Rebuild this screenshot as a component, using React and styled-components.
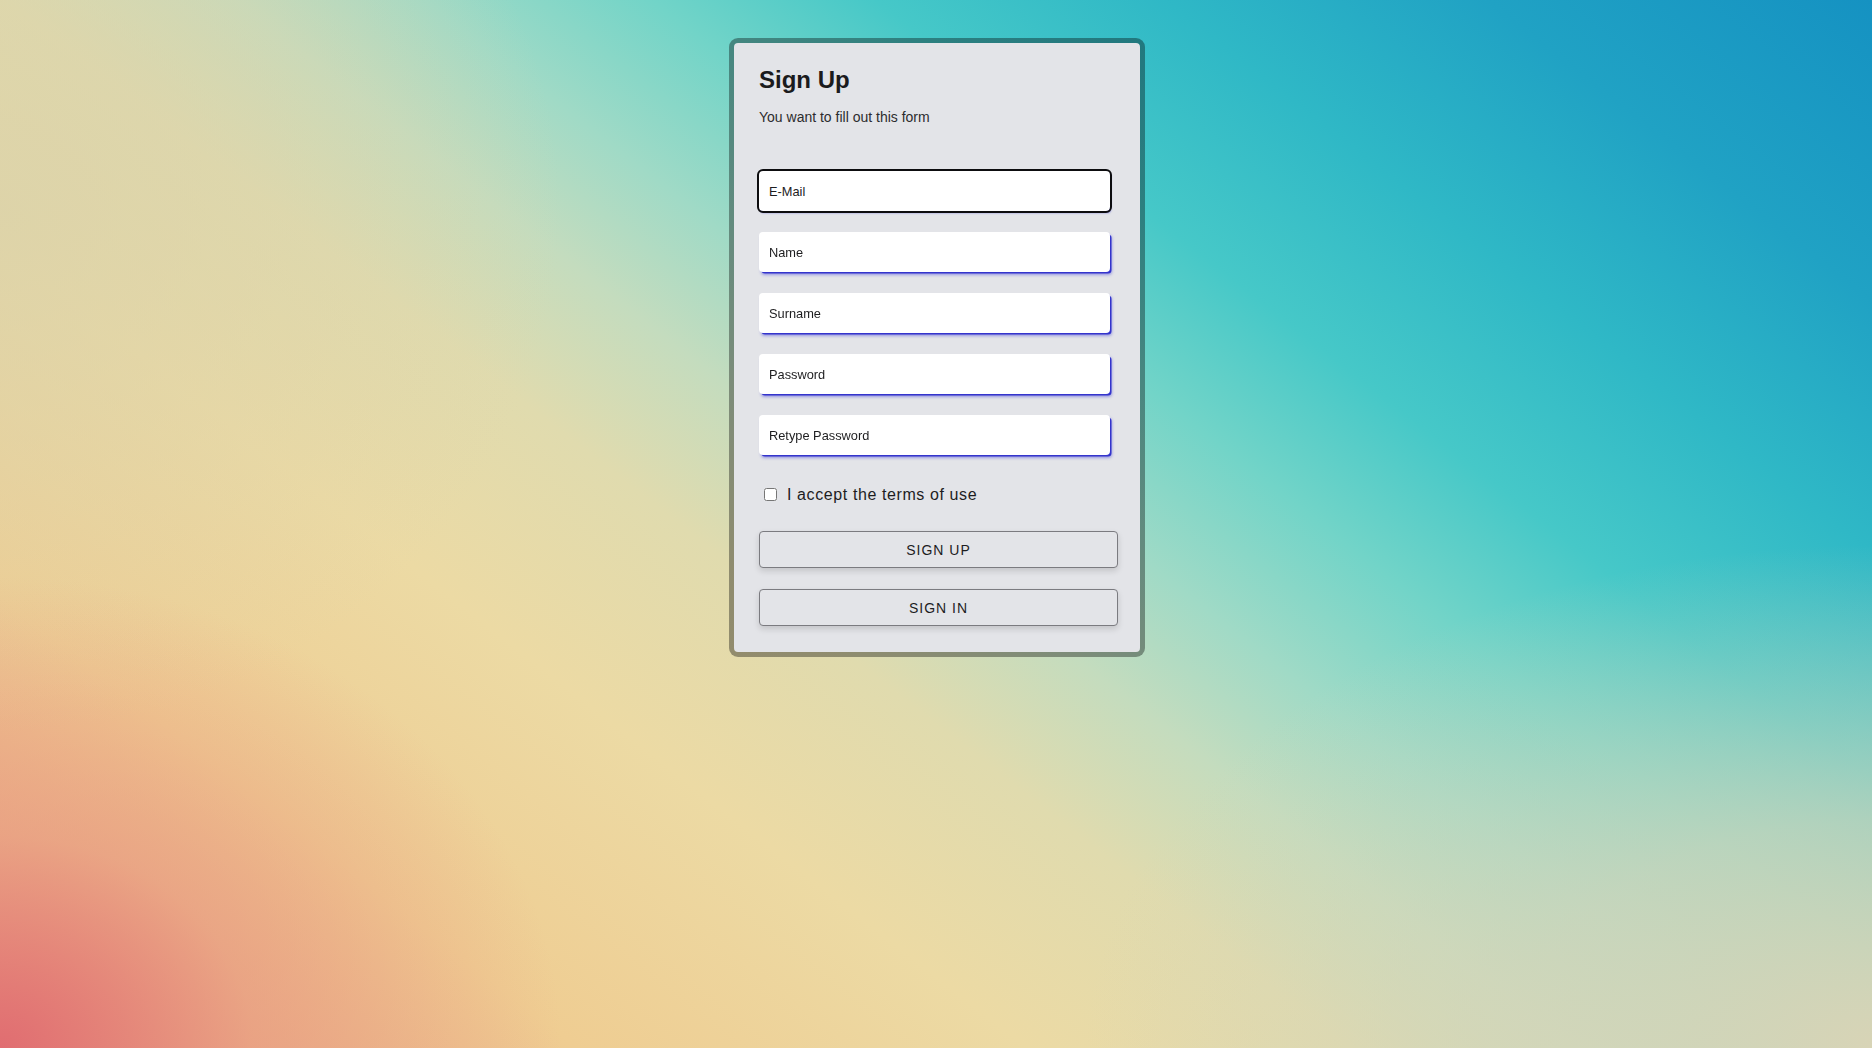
import React from "react";
import styled, { createGlobalStyle } from "styled-components";

const GlobalStyle = createGlobalStyle`
  html, body {
    margin: 0;
    padding: 0;
    height: 100%;
  }
  body {
    font-family: "Liberation Sans", Arial, sans-serif;
  }
  * { box-sizing: border-box; }
`;

const Page = styled.div`
  min-height: 100vh;
  width: 100%;
  display: flex;
  justify-content: center;
  align-items: flex-start;
  padding: 38px 0 0 2px;
  background:
    radial-gradient(ellipse 30% 45% at 0% 100%, rgba(224, 106, 112, 0.95) 0%, rgba(232, 150, 128, 0.6) 45%, rgba(238, 190, 140, 0) 100%),
    radial-gradient(ellipse 42% 48% at 100% 100%, rgba(216, 212, 182, 1) 0%, rgba(214, 212, 184, 0.7) 45%, rgba(210, 212, 186, 0) 100%),
    radial-gradient(ellipse 30% 50% at 0% 20%, rgba(218, 210, 170, 0.8) 0%, rgba(218, 210, 170, 0) 100%),
    linear-gradient(38deg,
      #e9a282 0%,
      #efcd92 18%,
      #ecdaa4 32%,
      #e0dbae 42%,
      #c4dcbe 49%,
      #a0dac6 55%,
      #72d4c8 62%,
      #46c8c8 69%,
      #2fb8c6 78%,
      #20a2c4 88%,
      #1592c2 100%);
`;

const Card = styled.form`
  width: 416px;
  border: 5px solid rgba(0, 0, 0, 0.36);
  border-radius: 9px;
  background: #e3e4e8;
  background-clip: padding-box;
  padding: 23px 22px 26px 25px;
  display: flex;
  flex-direction: column;
`;

const Title = styled.h2`
  margin: 0;
  font-size: 24px;
  line-height: 28px;
  font-weight: 700;
  color: #1b1b1d;
`;

const Subtitle = styled.p`
  margin: 15px 0 0;
  font-size: 14px;
  line-height: 16px;
  color: #2c2c2e;
`;

const Fields = styled.div`
  margin-top: 46px;
  display: flex;
  flex-direction: column;
  gap: 21px;
`;

const Input = styled.input`
  width: 351px;
  height: 40px;
  border: none;
  border-radius: 4px;
  padding: 0 10px;
  background: #ffffff;
  font-family: "Liberation Sans", Arial, sans-serif;
  font-size: 12.8px;
  color: #1d1d1f;
  box-shadow: ${(p) =>
    p.$active
      ? "1px 2px 2px rgba(40, 40, 210, 0.55)"
      : "2px 2px 0 -0.5px #3434cc, 2px 3px 3px rgba(60, 60, 220, 0.45)"};
  outline: ${(p) => (p.$active ? "2px solid #0d0d0f" : "none")};
  outline-offset: 0;

  &::placeholder {
    color: #1d1d1f;
    opacity: 1;
  }
`;

const CheckRow = styled.label`
  margin-top: 30px;
  display: flex;
  align-items: center;
  height: 19px;
  font-size: 16px;
  letter-spacing: 0.6px;
  color: #1d1d1f;
`;

const Checkbox = styled.input`
  width: 13px;
  height: 13px;
  margin: 3px 10px 3px 5px;
`;

const Buttons = styled.div`
  margin-top: 27px;
  display: flex;
  flex-direction: column;
  gap: 21px;
`;

const Button = styled.button`
  width: 359px;
  height: 37px;
  border: 1px solid #7b7b80;
  border-radius: 4px;
  background: #e3e4e8;
  font-family: "Liberation Sans", Arial, sans-serif;
  font-size: 14px;
  letter-spacing: 1px;
  text-transform: uppercase;
  color: #1d1d1f;
  box-shadow: 0 3px 6px rgba(0, 0, 0, 0.14);
  cursor: pointer;
`;

const fields = [
  { name: "email", label: "E-Mail", type: "email", active: true },
  { name: "name", label: "Name", type: "text" },
  { name: "surname", label: "Surname", type: "text" },
  { name: "password", label: "Password", type: "password" },
  { name: "retype", label: "Retype Password", type: "password" },
];

export default function App() {
  return (
    <>
      <GlobalStyle />
      <Page>
        <Card onSubmit={(e) => e.preventDefault()}>
          <Title>Sign Up</Title>
          <Subtitle>You want to fill out this form</Subtitle>
          <Fields>
            {fields.map((f) => (
              <Input
                key={f.name}
                name={f.name}
                type={f.type}
                placeholder={f.label}
                $active={f.active}
                autoFocus={f.active}
              />
            ))}
          </Fields>
          <CheckRow>
            <Checkbox type="checkbox" />
            I accept the terms of use
          </CheckRow>
          <Buttons>
            <Button type="submit">Sign Up</Button>
            <Button type="button">Sign In</Button>
          </Buttons>
        </Card>
      </Page>
    </>
  );
}
